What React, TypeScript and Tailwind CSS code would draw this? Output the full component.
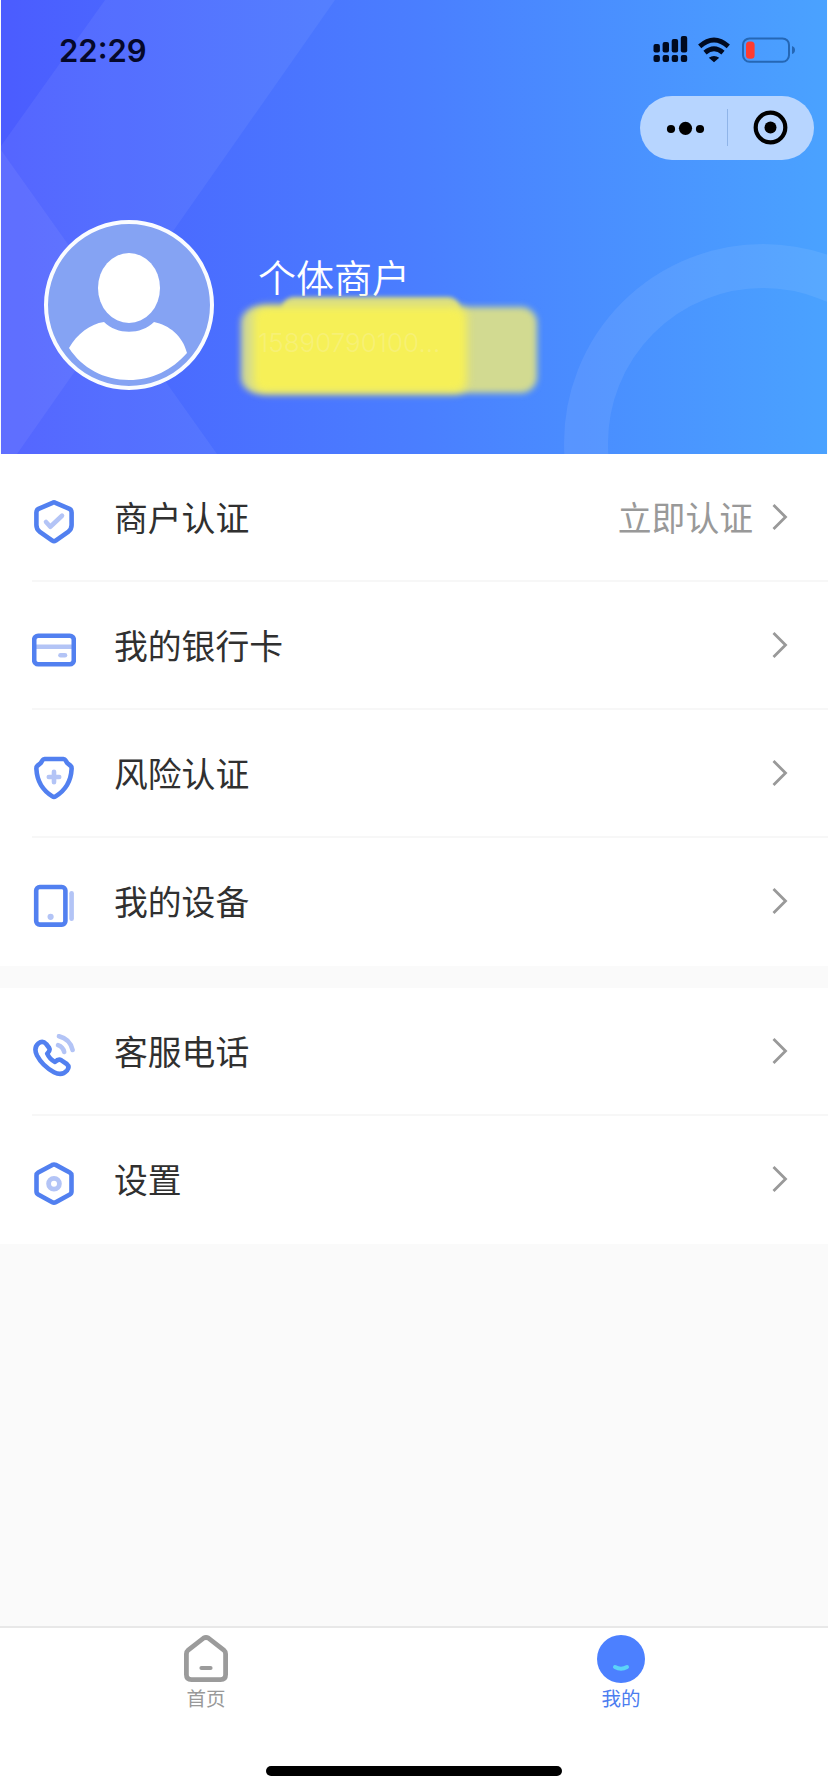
import type { ReactNode } from "react"

const BLUE = "#5280f0"
const PALE = "#b3c4f6"

function VerifyIcon() {
  return (
    <>
      <path
        d="M20.5 2.8Q22 2 23.5 2.8L37.5 8.9Q39.6 10 39.6 12.5V25Q39.6 29 36.5 31.6L23.7 40.6Q22 41.7 20.3 40.6L7.5 31.6Q4.4 29 4.4 25V12.5Q4.4 10 6.5 8.9Z"
        stroke={BLUE}
      />
      <path d="M14 22L18.3 26.7L30 15.7" stroke={PALE} />
    </>
  )
}

function CardIcon() {
  return (
    <>
      <path d="M3 18.8H41" stroke={PALE} />
      <path d="M28.5 27.2H33" stroke={PALE} />
      <rect x="2.2" y="7.7" width="39.6" height="28.6" rx="4" stroke={BLUE} />
    </>
  )
}

function RiskIcon() {
  return (
    <>
      <path
        d="M12.5 3H31.5Q32.8 3 33.6 4.4L35.2 7L38.4 9.6Q39.8 10.8 39.6 13C39 25 33 34.5 23.6 40.4Q22 41.4 20.4 40.4C11 34.5 5 25 4.4 13Q4.2 10.8 5.6 9.6L8.8 7L10.4 4.4Q11.2 3 12.5 3Z"
        stroke={BLUE}
      />
      <path d="M16.8 21H27.2M22 15.8V26.2" stroke={PALE} strokeWidth="4.6" />
    </>
  )
}

function DeviceIcon() {
  return (
    <>
      <rect x="4.2" y="3" width="29.2" height="37.6" rx="3.6" stroke={BLUE} />
      <circle cx="18.6" cy="32.8" r="3.1" fill={PALE} />
      <path d="M39.6 9.2V34.8" stroke={PALE} />
    </>
  )
}

function PhoneIcon() {
  return (
    <>
      <path
        d="M6.3 9.6Q10.5 6 14.2 10L17.2 14Q18.6 16.6 15.2 19.7Q17.6 25.2 23 28Q26.3 24.5 29.4 26.3L34.8 30Q38 32.8 35 36.5Q29.8 42.4 22 38.2Q10.5 32 5 21.5Q1.3 14 6.3 9.6Z"
        stroke={BLUE}
      />
      <path d="M27 2.2Q38.2 5 40.6 16" stroke={PALE} />
      <path d="M26 11.2Q31 13 32.2 18" stroke={PALE} />
    </>
  )
}

function SettingsIcon() {
  return (
    <>
      <path
        d="M20.3 2.9Q22 2 23.7 2.9L37.8 10.6Q39.5 11.6 39.5 13.6V29.6Q39.5 31.6 37.8 32.5L23.7 40.2Q22 41.1 20.3 40.2L6.2 32.5Q4.5 31.6 4.5 29.6V13.6Q4.5 11.6 6.2 10.6Z"
        stroke={BLUE}
      />
      <circle cx="22" cy="21.8" r="5.4" stroke={PALE} strokeWidth="4.8" />
    </>
  )
}

const accountItems = [
  { label: "商户认证", icon: <VerifyIcon />, note: "立即认证" },
  { label: "我的银行卡", icon: <CardIcon /> },
  { label: "风险认证", icon: <RiskIcon /> },
  { label: "我的设备", icon: <DeviceIcon /> },
]

const supportItems = [
  { label: "客服电话", icon: <PhoneIcon /> },
  { label: "设置", icon: <SettingsIcon /> },
]

type Item = { label: string; icon: ReactNode; note?: string }

function MenuList({ items }: { items: Item[] }) {
  return (
    <ul className="bg-white pl-8">
      {items.map((item) => (
        <li
          key={item.label}
          className="flex h-32 items-center border-b-2 border-[#f7f7f7] pr-[40px] last:border-transparent"
        >
          <svg
            viewBox="0 0 44 44"
            className="mt-2.5 size-11"
            fill="none"
            strokeWidth="4.6"
            strokeLinecap="round"
            strokeLinejoin="round"
          >
            {item.icon}
          </svg>
          <span className="ml-[38px] flex-1 text-[33.8px] leading-none text-[#303030]">{item.label}</span>
          {item.note && <span className="mr-[19px] text-[33.8px] leading-none text-[#999]">{item.note}</span>}
          <svg viewBox="0 0 16 28" className="h-7 w-4" fill="none" stroke="#999" strokeWidth="2.8">
            <path d="M1.5 2L13.5 14L1.5 26" />
          </svg>
        </li>
      ))}
    </ul>
  )
}

function HeaderPattern() {
  return (
    <svg viewBox="0 0 826 454" className="absolute inset-0 h-full w-full" fill="none">
      <path d="M104 0H334L16 454H0V146Z" fill="#fff" fillOpacity="0.06" />
      <path d="M0 150L216 454H0Z" fill="#fff" fillOpacity="0.06" />
      <circle cx="762" cy="443" r="177" stroke="#fff" strokeOpacity="0.08" strokeWidth="44" />
    </svg>
  )
}

function StatusBar() {
  return (
    <div className="flex h-[96px] items-center justify-between pt-1 pr-[32px] pl-[58px]">
      <span className="font-['Inter'] text-[31px] leading-none font-semibold text-[#05082a]">22:29</span>
      <svg viewBox="0 0 144 28" className="mb-[3px] h-7 w-36" fill="none">
        <g fill="#000a20">
          <rect x="2.5" y="9" width="6.4" height="8.6" rx="2" />
          <rect x="11.6" y="7" width="6.4" height="10.6" rx="2" />
          <rect x="20.7" y="4" width="6.4" height="13.6" rx="2" />
          <rect x="29.8" y="1" width="6.4" height="16.6" rx="2" />
          <rect x="2.5" y="20" width="6.4" height="7" rx="2" />
          <rect x="11.6" y="20" width="6.4" height="7" rx="2" />
          <rect x="20.7" y="20" width="6.4" height="7" rx="2" />
          <rect x="29.8" y="20" width="6.4" height="7" rx="2" />
          <path d="M57.8 22.7Q63 19.5 68.2 22.7L63 27.3Z" />
        </g>
        <g stroke="#000a20" strokeWidth="4.8">
          <path d="M48.7 11.4Q63 -1.2 77.3 11.4" />
          <path d="M54 17.6Q63 9.8 72 17.6" />
        </g>
        <rect x="92" y="3.4" width="46" height="23.4" rx="6.5" stroke="#2567b5" strokeWidth="2" />
        <rect x="95" y="6.4" width="8.6" height="17.4" rx="3.5" fill="#ff3b30" />
        <path d="M141 11Q144 12 144 15T141 19Z" fill="#2567b5" />
      </svg>
    </div>
  )
}

function Capsule() {
  return (
    <div className="mr-[13px] ml-auto flex h-16 w-[174px] items-center rounded-full bg-[#b7d5ff]">
      <svg viewBox="0 0 174 64" className="h-16 w-[174px]">
        <circle cx="31" cy="33" r="4.1" />
        <circle cx="45.5" cy="32.3" r="6.6" />
        <circle cx="60" cy="33" r="4.1" />
        <path d="M87.5 13V50" stroke="#8fb4e8" />
        <circle cx="130.5" cy="31.5" r="14.8" fill="none" stroke="#000" strokeWidth="4.2" />
        <circle cx="130.5" cy="31.5" r="6" />
      </svg>
    </div>
  )
}

function Profile() {
  return (
    <div className="mt-[60px] flex pl-[43px]">
      <svg viewBox="0 0 170 170" className="size-[170px]">
        <circle cx="85" cy="85" r="83" fill="#85a3f3" stroke="#fafcff" strokeWidth="4" />
        <ellipse cx="85" cy="68" rx="31" ry="35" fill="#fff" />
        <path
          d="M25 128C33 114 46 104 60 102C73 115 97 115 110 102C125 105 139 116 143 133C128 150 108 160 85 160C60 160 38 148 25 128Z"
          fill="#fff"
        />
      </svg>
      <div className="relative ml-[44px] pt-[37px]">
        <p className="text-[38px] leading-[38px] font-[350] text-white">个体商户</p>
        {/* marker strokes hiding the account number */}
        <div className="absolute top-[77px] left-[24px] h-8 w-[178px] rounded-xl bg-[#d8dd86] blur-[2px]" />
        <div className="absolute top-[87px] left-[-17px] h-[86px] w-[296px] rounded-[16px] bg-[#d2da91] blur-[3px]" />
        <div className="absolute top-[86px] left-[-5px] h-[87px] w-[214px] rounded-xl bg-[#f6f057] blur-[4px]" />
        <p className="relative mt-[32px] font-['Inter'] text-[26px] leading-8 font-light text-[#f7f075]">15890790100...</p>
      </div>
    </div>
  )
}

function TabBar() {
  return (
    <nav className="flex h-[166px] flex-col border-t-2 border-[#e8e8e8] bg-white">
      <div className="grid grid-cols-2 pt-[6px] text-[19.5px] leading-none">
        <div className="flex flex-col items-center gap-1 pr-[2px] text-[#999]">
          <svg viewBox="0 0 50 50" className="size-[50px]" fill="none" stroke="#9b9b9b" strokeWidth="4.8" strokeLinecap="round">
            <path d="M22.5 4.2Q25 2.8 27.5 4.2L42.8 16Q44.6 17.5 44.6 20V40.5Q44.6 45.7 39.5 45.7H10.5Q5.4 45.7 5.4 40.5V20Q5.4 17.5 7.2 16Z" />
            <path d="M20.5 34H29.5" strokeWidth="4.2" />
          </svg>
          <span>首页</span>
        </div>
        <div className="flex flex-col items-center gap-1 text-[#4c7df0]">
          <svg viewBox="0 0 50 50" className="size-[50px]" fill="none">
            <circle cx="25" cy="25" r="24" fill="#4c80ff" />
            <path d="M19 33Q25 36.5 31 33" stroke="#5bd3f8" strokeWidth="4" strokeLinecap="round" />
          </svg>
          <span>我的</span>
        </div>
      </div>
      <div className="mx-auto mt-auto mb-[16px] h-2.5 w-[296px] rounded-full bg-black" />
    </nav>
  )
}

export default function App() {
  return (
    <div className="flex h-[1792px] w-[828px] flex-col bg-[#fafafa] font-['Noto_Sans_CJK_SC',sans-serif]">
      <header className="relative mx-px h-[454px] overflow-hidden bg-linear-to-r from-[#4b5cff] via-[#4a7eff] to-[#4aa2ff]">
        <HeaderPattern />
        <div className="relative">
          <StatusBar />
          <Capsule />
          <Profile />
        </div>
      </header>
      <main className="flex flex-1 flex-col gap-[22px]">
        <MenuList items={accountItems} />
        <MenuList items={supportItems} />
      </main>
      <TabBar />
    </div>
  )
}
